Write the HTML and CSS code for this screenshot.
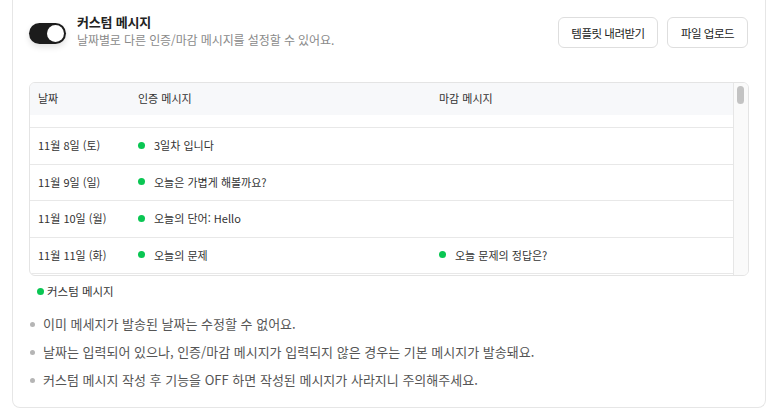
FILE: index.html
```html
<!DOCTYPE html>
<html lang="ko">
<head>
<meta charset="utf-8">
<title>커스텀 메시지</title>
<link rel="stylesheet" href="styles.css">
</head>
<body>
<div class="card">
  <div class="head">
    <div class="head-left">
      <span class="toggle"><span class="knob"></span></span>
      <div class="head-text">
        <div class="title">커스텀 메시지</div>
        <div class="subtitle">날짜별로 다른 인증/마감 메시지를 설정할 수 있어요.</div>
      </div>
    </div>
    <div class="actions">
      <button class="btn btn-template">템플릿 내려받기</button>
      <button class="btn btn-upload">파일 업로드</button>
    </div>
  </div>

  <div class="table">
    <div class="table-main">
      <div class="row row-head">
        <div class="cell">날짜</div>
        <div class="cell">인증 메시지</div>
        <div class="cell">마감 메시지</div>
      </div>
      <div class="row row-partial"></div>
      <div class="row row-a">
        <div class="cell">11월 8일 (토)</div>
        <div class="cell"><span class="dot"></span>3일차 입니다</div>
        <div class="cell"></div>
      </div>
      <div class="row row-b">
        <div class="cell">11월 9일 (일)</div>
        <div class="cell"><span class="dot"></span>오늘은 가볍게 해볼까요?</div>
        <div class="cell"></div>
      </div>
      <div class="row row-a">
        <div class="cell">11월 10일 (월)</div>
        <div class="cell"><span class="dot"></span>오늘의 단어: Hello</div>
        <div class="cell"></div>
      </div>
      <div class="row row-b">
        <div class="cell">11월 11일 (화)</div>
        <div class="cell"><span class="dot"></span>오늘의 문제</div>
        <div class="cell"><span class="dot"></span>오늘 문제의 정답은?</div>
      </div>
    </div>
    <div class="scrollbar"><span class="thumb"></span></div>
  </div>

  <div class="legend"><span class="dot dot-small"></span>커스텀 메시지</div>

  <ul class="notes">
    <li>이미 메세지가 발송된 날짜는 수정할 수 없어요.</li>
    <li>날짜는 입력되어 있으나, 인증/마감 메시지가 입력되지 않은 경우는 기본 메시지가 발송돼요.</li>
    <li>커스텀 메시지 작성 후 기능을 OFF 하면 작성된 메시지가 사라지니 주의해주세요.</li>
  </ul>
</div>
</body>
</html>
```

FILE: styles.css
```css
* { box-sizing: border-box; }

html, body {
  margin: 0;
  padding: 0;
  background: #ffffff;
}

body {
  font-family: "Noto Sans CJK KR", "Noto Sans", sans-serif;
  color: #333333;
}

.card {
  margin: 0 13px 0 12px;
  width: 754px;
  border: 1px solid #e6e6e6;
  border-top: 0;
  border-radius: 0 0 8px 8px;
  padding: 13px 16px 17px 16px;
}

.head {
  display: flex;
  justify-content: space-between;
  align-items: flex-start;
}

.head-left {
  display: flex;
  align-items: flex-start;
  gap: 11px;
}

.toggle {
  display: flex;
  justify-content: flex-end;
  align-items: center;
  width: 37px;
  height: 21px;
  margin-top: 10px;
  padding: 0 2px;
  border-radius: 11px;
  background: #1c1c1c;
  box-shadow: 0 3px 6px rgba(0, 0, 0, 0.12);
}

.knob {
  width: 17px;
  height: 17px;
  border-radius: 50%;
  background: #ffffff;
}

.title {
  font-size: 13px;
  font-weight: 700;
  line-height: 18px;
  letter-spacing: -0.2px;
  color: #222222;
}

.subtitle {
  margin-top: 1px;
  font-size: 12px;
  line-height: 16px;
  letter-spacing: -0.1px;
  color: #8a8a8a;
}

.actions {
  display: flex;
  gap: 9px;
  margin-top: 4px;
  margin-right: 1px;
}

.btn {
  height: 31px;
  border: 1px solid #dedede;
  border-radius: 6px;
  background: #ffffff;
  font-family: "Noto Sans CJK KR", "Noto Sans", sans-serif;
  font-size: 11.5px;
  letter-spacing: -0.5px;
  color: #222222;
  padding: 0;
}

.btn-template { width: 100px; }
.btn-upload { width: 81px; }

.table {
  display: flex;
  margin-top: 34px;
  width: 720px;
  height: 194px;
  border: 1px solid #e4e4e4;
  border-radius: 6px;
  overflow: hidden;
}

.table-main {
  flex: 1;
  overflow: hidden;
}

.row {
  display: grid;
  grid-template-columns: 100px 301px 1fr;
  align-items: center;
  border-bottom: 1px solid #e8e8e8;
  font-size: 11px;
  letter-spacing: 0;
  color: #333333;
}

.row-head {
  height: 32px;
  background: #f7f8fa;
  border-bottom: 0;
}

.row-partial { height: 13px; }
.row-a { height: 37px; }
.row-b { height: 36px; }

.cell {
  display: flex;
  align-items: center;
  padding-left: 8px;
  padding-bottom: 2px;
  white-space: nowrap;
}

.dot {
  display: inline-block;
  width: 7px;
  height: 7px;
  margin-right: 9px;
  border-radius: 50%;
  background: #0ac653;
  flex: none;
}

.scrollbar {
  width: 15px;
  flex: none;
  border-left: 1px solid #e6e6e6;
  background: #fafafa;
  padding: 3px 0 0 3px;
}

.thumb {
  display: block;
  width: 7px;
  height: 18px;
  border-radius: 4px;
  background: #c3c3c3;
}

.legend {
  display: flex;
  align-items: center;
  margin: 7px 0 0 8px;
  font-size: 11.5px;
  line-height: 16px;
  letter-spacing: 0;
  color: #333333;
}

.dot-small {
  width: 7px;
  height: 7px;
  margin-right: 3px;
}

.notes {
  list-style: none;
  margin: 15px 0 0 0;
  padding: 0;
  display: flex;
  flex-direction: column;
  gap: 8px;
}

.notes li {
  display: flex;
  align-items: center;
  font-size: 13px;
  line-height: 20px;
  letter-spacing: 0;
  color: #555555;
}

.notes li::before {
  content: "";
  display: block;
  width: 5px;
  height: 5px;
  margin: 0 8px 0 1px;
  border-radius: 50%;
  background: #b5b5b5;
  flex: none;
}
```
